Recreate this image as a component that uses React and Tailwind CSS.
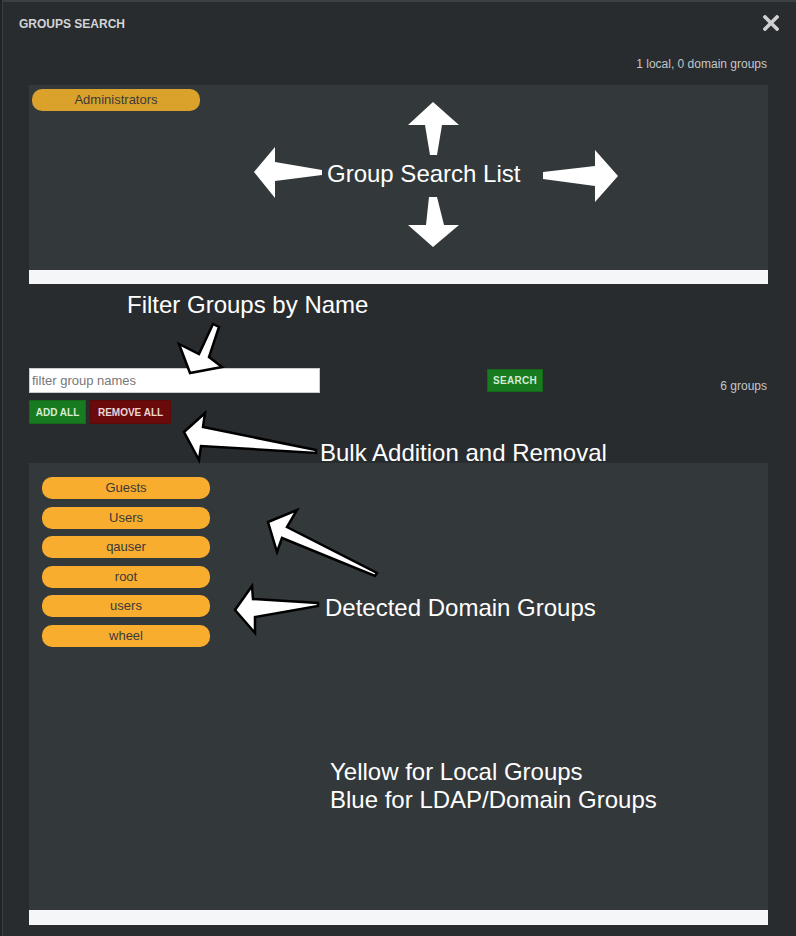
import React from "react";

const localGroups = ["Guests", "Users", "qauser", "root", "users", "wheel"];

// white call-out arrows drawn over the dialog
const arrows = [
  { pts: "433,102 459,125 442,125 437,155 430,155 425,125 408,125", outline: false },
  { pts: "429,197 437,197 444,225 459,225 433,247 408,225 426,225", outline: false },
  { pts: "254,172 275,147 275,162 322,170 322,175 275,181 275,198", outline: false },
  { pts: "543,172 595,166 595,150 618,176 595,202 595,186 543,179", outline: false },
  { pts: "213,324 219,327 209,357 222,367 190,373 179,344 199,354", outline: true },
  { pts: "184,432 205,413 203,427 316,450 316,453 201,446 199,460", outline: true },
  { pts: "268,522 297,510 287,527 377,573 375,576 282,538 277,552", outline: true },
  { pts: "235,610 252,586 253,599 318,603 318,606 255,617 255,633", outline: true },
];

function Chip({ name, local }) {
  return (
    <div
      className={`w-[168px] h-[22px] rounded-[10px] flex items-center justify-center text-[13px] text-[#3a3a3a] ${
        local ? "bg-[#f8ad2e]" : "bg-[#daa22a]"
      }`}
    >
      {name}
    </div>
  );
}

function Note({ className, children }) {
  return (
    <div className={`absolute text-[24px] leading-[24px] text-white whitespace-nowrap ${className}`}>
      {children}
    </div>
  );
}

export default function App() {
  return (
    <div
      className="relative w-[796px] h-[936px] flex bg-[#1e2225] overflow-hidden"
      style={{ fontFamily: '"Liberation Sans", Arial, sans-serif' }}
    >
      {/* page behind the dialog */}
      <div className="w-[3px] bg-[#202427] border-r border-[#3a3f43]"></div>

      {/* Dialog */}
      <div className="flex-1 flex flex-col bg-[#282c2f] border-t-2 border-[#3b4044]">
        {/* Header */}
        <div className="flex items-start justify-between pl-[16px] pr-[17px] pt-[15px]">
          <h1 className="text-[12px] leading-[14px] font-bold text-[#d2d4d6]">GROUPS SEARCH</h1>
          <svg width="16" height="16" viewBox="0 0 16 16" className="-mt-[2px]">
            <path d="M2 2 L14 14 M14 2 L2 14" stroke="#cfd0d1" strokeWidth="3.6" strokeLinecap="square" />
          </svg>
        </div>

        <div className="pl-[26px] pr-[28px]">
          <div className="mt-[26px] text-right text-[12px] leading-[14px] text-[#c4c6c8] pr-[1px]">
            1 local, 0 domain groups
          </div>

          {/* Selected groups */}
          <div className="mt-[14px] flex flex-col">
            <div className="h-[185px] bg-[#33383b] pl-[3px] pt-[4px]">
              <Chip name="Administrators" />
            </div>
            <div className="h-[14px] bg-[#f5f6f7]"></div>
          </div>

          {/* Filter row */}
          <div className="mt-[84px] flex items-start h-[25px]">
            <input
              type="text"
              placeholder="filter group names"
              className="w-[291px] h-[25px] bg-white border border-[#c9cbcd] px-[2px] text-[13px] text-[#333] placeholder:text-[#777] outline-none"
            />
            <button className="ml-[167px] mt-[1px] w-[56px] h-[23px] bg-[#197b20] border border-[#146a1a] text-[10px] font-bold text-[#d3ecd3] tracking-[0.3px]">
              SEARCH
            </button>
            <div className="flex-1 text-right text-[12px] leading-[14px] text-[#c4c6c8] pt-[11px] pr-[1px]">
              6 groups
            </div>
          </div>

          <div className="mt-[7px] flex gap-[4px]">
            <button className="w-[57px] h-[24px] bg-[#197b20] border border-[#146a1a] text-[10px] font-bold text-[#d6edd6]">
              ADD ALL
            </button>
            <button className="w-[81px] h-[24px] bg-[#6b0a0a] border border-[#5a0808] text-[10px] font-bold text-[#ecd6d6]">
              REMOVE ALL
            </button>
          </div>

          {/* Available groups */}
          <div className="mt-[39px] flex flex-col">
            <div className="h-[447px] bg-[#33383b] pl-[13px] pt-[14px] flex flex-col gap-[7.5px]">
              {localGroups.map((g) => (
                <Chip key={g} name={g} local />
              ))}
            </div>
            <div className="h-[15px] bg-[#f5f6f7]"></div>
          </div>
        </div>
      </div>

      {/* Annotations */}
      <svg className="absolute inset-0 pointer-events-none" width="796" height="936" viewBox="0 0 796 936">
        {arrows.map((a, i) => (
          <polygon
            key={i}
            points={a.pts}
            fill="#ffffff"
            stroke={a.outline ? "#000000" : "none"}
            strokeWidth={a.outline ? 2.5 : 0}
            strokeLinejoin="miter"
          />
        ))}
      </svg>
      <Note className="left-[327px] top-[162px]">Group Search List</Note>
      <Note className="left-[127px] top-[293px]">Filter Groups by Name</Note>
      <Note className="left-[320px] top-[441px]">Bulk Addition and Removal</Note>
      <Note className="left-[325px] top-[596px]">Detected Domain Groups</Note>
      <div className="absolute left-[330px] top-[758px] text-[24px] leading-[28px] text-white whitespace-nowrap">
        <div>Yellow for Local Groups</div>
        <div>Blue for LDAP/Domain Groups</div>
      </div>
    </div>
  );
}
